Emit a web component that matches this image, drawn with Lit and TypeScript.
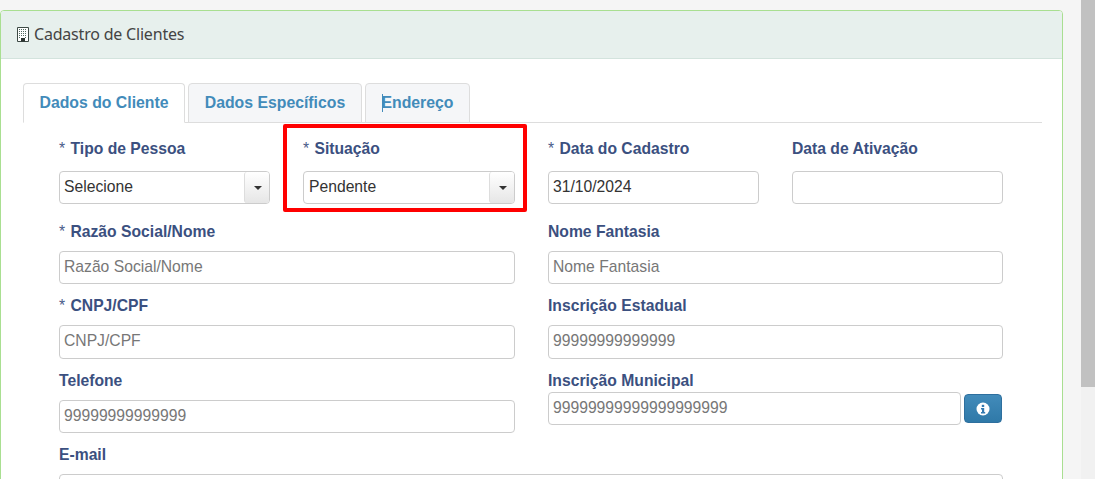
import { LitElement, html, css } from "lit";
import { customElement } from "lit/decorators.js";

@customElement("app-root")
export class AppRoot extends LitElement {
  static styles = css`
    :host { display: flex; width: 1095px; height: 479px; overflow: hidden; background: #f5f5f5; font-family: "Liberation Sans", Arial, sans-serif; }
    .main { width: 1063px; padding-top: 10px; flex: none; }
    .scroll { margin-left: 18px; width: 14px; background: #f1f1f1; flex: none; }
    .thumb { height: 387px; background: #c1c1c1; }
    .panel { background: #fff; border: 1px solid #a9df91; border-radius: 4px 4px 0 0; height: 500px; box-sizing: border-box; }
    .head { height: 48px; box-sizing: border-box; background: #e7f0ed; border-bottom: 1px solid #d3e3dd; border-radius: 3px 3px 0 0; display: flex; align-items: center; gap: 5px; padding-left: 16px; font: 16px "Noto Sans", sans-serif; color: #444; }
    .head svg { display: block; }
    .head span { letter-spacing: -0.2px; margin-top: -2px; }
    .body { padding: 24px 20px 0 22px; }
    .tabs { display: flex; gap: 3px; height: 40px; border-bottom: 1px solid #ddd; box-sizing: border-box; }
    .tab { box-sizing: border-box; height: 40px; border: 1px solid #ddd; border-radius: 4px 4px 0 0; background: #f5f6f8; color: #428bba; font-weight: 700; font-size: 15.8px; display: flex; align-items: center; justify-content: center; }
    .tab.active { background: #fff; border-bottom-color: #fff; }
    .t1 { width: 162px; } .t2 { width: 174px; } .t3 { width: 105px; }
    .cursored { position: relative; }
    .cursored::before { content: ""; position: absolute; left: 0; top: 0; bottom: 0; width: 1px; background: #428bba; }
    .form { padding: 0 39px 0 36px; display: grid; grid-template-columns: 456px 455px; column-gap: 33px; }
    .half { display: grid; }
    .half.left { grid-template-columns: 211px 212px; column-gap: 33px; }
    .half.right { grid-template-columns: 211px 211px; column-gap: 33px; }
    .cell { position: relative; min-width: 0; }
    label { display: block; height: 20px; line-height: 20px; margin-bottom: 9px; font-size: 15.7px; font-weight: 700; color: #3b5080; white-space: nowrap; }
    label i { font-style: normal; font-weight: 400; color: #4a5d8a; margin-right: 1px; }
    .r1 { padding-top: 16px; }
    .r1 label { margin-bottom: 12px; }
    .r2 { padding-top: 18px; }
    .r3, .r4, .r5 { padding-top: 12px; }
    .input { box-sizing: border-box; height: 33px; border: 1px solid #ccc; border-radius: 4px; background: #fff; font-size: 15.7px; line-height: 29px; padding-left: 4px; color: #333; white-space: nowrap; overflow: hidden; }
    .input.tall { height: 34px; }
    .ph { color: #777; }
    .select { display: flex; padding-left: 0; }
    .select span { flex: 1; padding-left: 4px; }
    .cell.sit .select span { padding-left: 5px; }
    .btn { width: 25px; height: 31px; flex: none; padding-left: 1px; box-sizing: border-box; border-left: 1px solid #ddd; border-radius: 3px 0 0 3px; background: linear-gradient(#fff, #e6e6e6); display: flex; align-items: center; justify-content: center; }
    .caret { width: 0; height: 0; border-left: 4px solid transparent; border-right: 4px solid transparent; border-top: 4px solid #333; }
    .mark { position: absolute; left: -20px; top: -15px; width: 244px; height: 88px; box-sizing: border-box; border: 4px solid #f00; border-radius: 2px; pointer-events: none; }
    .withbtn { display: flex; gap: 3px; margin-top: -8px; align-items: center; }
    .withbtn .input { width: 413px; flex: none; }
    .info { width: 38px; height: 29px; box-sizing: border-box; border: 1px solid #2e6f9e; border-radius: 4px; background: linear-gradient(#428bba, #2f79a8); display: flex; align-items: center; justify-content: center; }
    .info svg { display: block; }
    .full { grid-column: 1 / -1; }
  `;

  private field(lbl: string, ph: string, req = false, tall = false) {
    return html`<div class="cell">
      <label>${req ? html`<i>*</i> ` : ""}${lbl}</label>
      <div class="input ph ${tall ? "tall" : ""}">${ph}</div>
    </div>`;
  }

  private select(value: string) {
    return html`<div class="input select"><span>${value}</span><div class="btn"><div class="caret"></div></div></div>`;
  }

  private buildingIcon() {
    return html`<svg width="12" height="15" viewBox="0 0 12 15" aria-hidden="true">
      <path d="M.5.5h11v14h-11z" fill="#fff" stroke="#3d4a45"/>
      <path d="M2 2.5h8M2 4.5h8M2 6.5h8M2 8.5h8M2 10.5h2M8 10.5h2" stroke="#4f6a60" stroke-width="1" stroke-dasharray="1 1"/>
      <path d="M4 11h4v3.5H4z" fill="#2c3532"/>
    </svg>`;
  }

  render() {
    return html`
      <div class="main">
        <div class="panel">
          <div class="head">${this.buildingIcon()}<span>Cadastro de Clientes</span></div>
          <div class="body">
            <div class="tabs">
              <div class="tab t1 active">Dados do Cliente</div>
              <div class="tab t2">Dados Específicos</div>
              <div class="tab t3"><span class="cursored">Endereço</span></div>
            </div>
            <div class="form">
              <div class="half left r1">
                <div class="cell">
                  <label><i>*</i> Tipo de Pessoa</label>
                  ${this.select("Selecione")}
                </div>
                <div class="cell sit">
                  <div class="mark"></div>
                  <label><i>*</i> Situação</label>
                  ${this.select("Pendente")}
                </div>
              </div>
              <div class="half right r1">
                <div class="cell">
                  <label><i>*</i> Data do Cadastro</label>
                  <div class="input">31/10/2024</div>
                </div>
                <div class="cell">
                  <label>Data de Ativação</label>
                  <div class="input"></div>
                </div>
              </div>
              <div class="r2">${this.field("Razão Social/Nome", "Razão Social/Nome", true)}</div>
              <div class="r2">${this.field("Nome Fantasia", "Nome Fantasia")}</div>
              <div class="r3">${this.field("CNPJ/CPF", "CNPJ/CPF", true, true)}</div>
              <div class="r3">${this.field("Inscrição Estadual", "99999999999999", false, true)}</div>
              <div class="r4">${this.field("Telefone", "99999999999999")}</div>
              <div class="r4">
                <div class="cell">
                  <label>Inscrição Municipal</label>
                  <div class="withbtn">
                    <div class="input ph">99999999999999999999</div>
                    <div class="info">
                      <svg width="14" height="14" viewBox="0 0 14 14" aria-hidden="true">
                        <circle cx="7" cy="7" r="6.5" fill="#fff"/>
                        <rect x="5.8" y="2.8" width="2.4" height="2.2" fill="#337ab0"/>
                        <path d="M5 6h3.2v4H9.2v1.4H5V10h1V7.4H5z" fill="#337ab0"/>
                      </svg>
                    </div>
                  </div>
                </div>
              </div>
              <div class="r5 full">${this.field("E-mail", "")}</div>
            </div>
          </div>
        </div>
      </div>
      <div class="scroll"><div class="thumb"></div></div>
    `;
  }
}
